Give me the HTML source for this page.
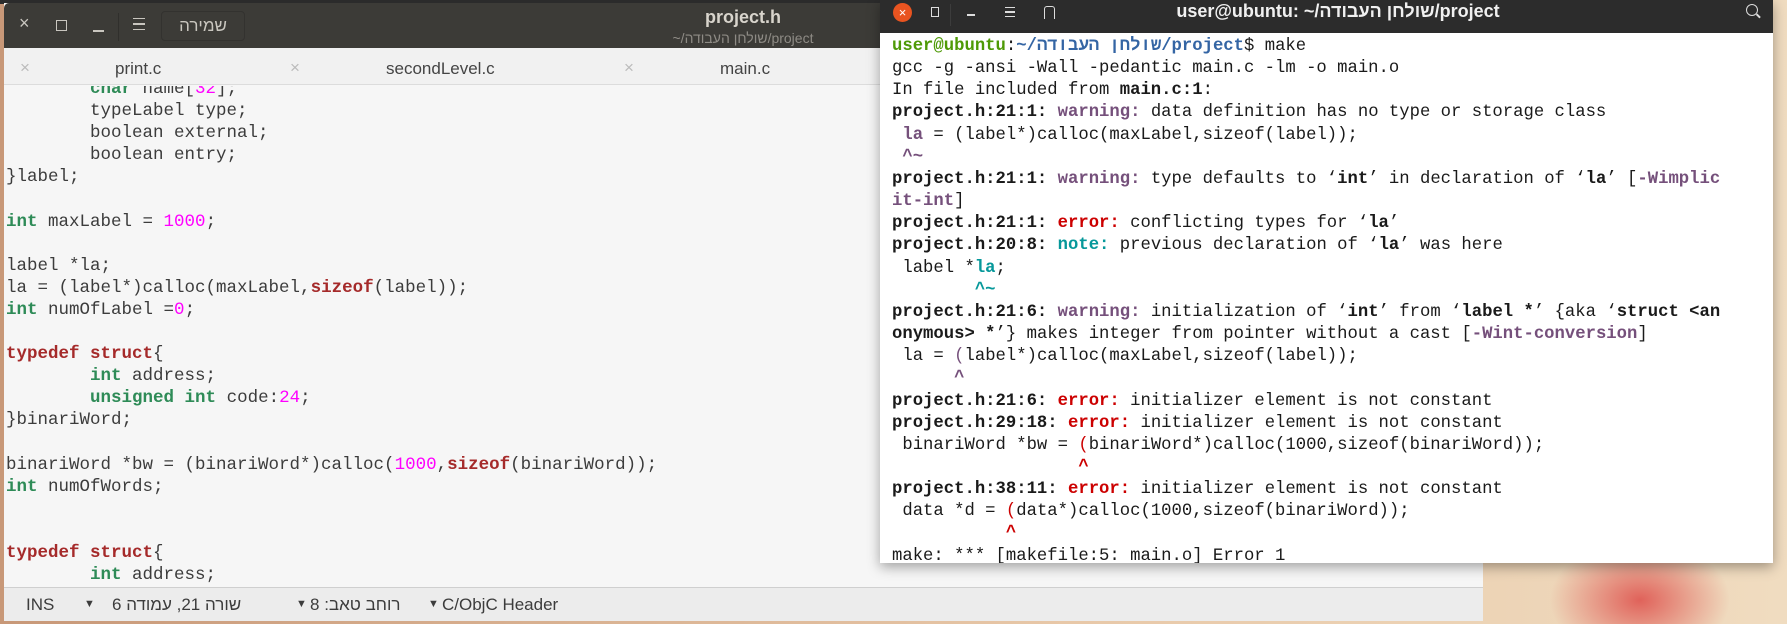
<!DOCTYPE html>
<html><head><meta charset="utf-8"><style>
*{margin:0;padding:0;box-sizing:border-box}
body{width:1787px;height:624px;overflow:hidden;position:relative;background:#d9b89a;font-family:"Liberation Sans","Noto Sans CJK SC",sans-serif}
.abs{position:absolute}
pre{font-family:"Liberation Mono",monospace;white-space:pre;position:absolute}
#ed pre{font-size:17.5px;line-height:22.1px;color:#3c3c3c}
.k{color:#2e8b57;font-weight:bold}
.s{color:#a52a2a;font-weight:bold}
.n{color:#ff00ff}
#tm pre{font-size:17.25px;line-height:22.15px;color:#1a1a1a}
b{font-weight:bold}
.w{color:#75507b;font-weight:bold}
.e{color:#cc0000;font-weight:bold}
.t{color:#06989a;font-weight:bold}
.g{color:#4e9a06;font-weight:bold}
.bl{color:#3465a4;font-weight:bold}
.wn{color:#75507b}
</style></head><body>
<div class="abs" style="left:0;top:0;width:1787px;height:624px;background:radial-gradient(ellipse 90px 60px at 1640px 600px,#e0625a,rgba(224,98,90,0)),linear-gradient(90deg,#c89878,#e8c8a8 60%,#f0dcc0);"></div>
<div class="abs" style="left:0;top:0;width:900px;height:4px;background:#2b2b2b"></div>
<div class="abs" style="left:4px;top:3px;width:1479px;height:618px;background:#f6f6f6;overflow:hidden">
 <div class="abs" style="left:0;top:0;width:1479px;height:45px;background:#3c3b37;border-radius:5px 5px 0 0"></div>
 <div class="abs" style="left:15px;top:10px;color:#c9c6bf;font-size:18px">×</div>
 <div class="abs" style="left:52px;top:17px;width:11px;height:11px;border:1.5px solid #c9c6bf"></div>
 <div class="abs" style="left:89px;top:27px;width:11px;height:2px;background:#c9c6bf"></div>
 <div class="abs" style="left:114px;top:10px;width:1px;height:28px;background:#302f2c"></div>
 <div class="abs" style="left:129px;top:15px;width:12px;height:12px;border-top:1.5px solid #c9c6bf;border-bottom:1.5px solid #c9c6bf"><div style="margin-top:4px;height:1.5px;background:#c9c6bf"></div></div>
 <div class="abs" style="left:157px;top:8px;width:84px;height:30px;border:1px solid #33322f;border-radius:4px;color:#c9c6bf;font-size:17px;text-align:center;line-height:28px">שמירה</div>
 <div class="abs" style="left:639px;top:4px;width:200px;text-align:center;color:#d8d4cc;font-size:18px;font-weight:bold">project.h</div>
 <div class="abs" style="left:589px;top:27px;width:300px;text-align:center;color:#8e8b85;font-size:14px">~/שולחן העבודה/project</div>
 <div class="abs" style="left:0;top:45px;width:1479px;height:37px;background:#f1f1f1;border-bottom:1px solid #dcdcdc;color:#444;font-size:17px">
  <span class="abs" style="left:16px;top:10px;color:#bbb">×</span>
  <span class="abs" style="left:111px;top:11px">print.c</span>
  <span class="abs" style="left:286px;top:10px;color:#bbb">×</span>
  <span class="abs" style="left:382px;top:11px">secondLevel.c</span>
  <span class="abs" style="left:620px;top:10px;color:#bbb">×</span>
  <span class="abs" style="left:716px;top:11px">main.c</span>
 </div>
 <div id="ed" class="abs" style="left:0;top:83px;width:1479px;height:501px;overflow:hidden">
<pre style="left:2px;top:-8px">        <span class="k">char</span> name[<span class="n">32</span>];
        typeLabel type;
        boolean external;
        boolean entry;
}label;

<span class="k">int</span> maxLabel = <span class="n">1000</span>;

label *la;
la = (label*)calloc(maxLabel,<span class="s">sizeof</span>(label));
<span class="k">int</span> numOfLabel =<span class="n">0</span>;

<span class="s">typedef</span> <span class="s">struct</span>{
        <span class="k">int</span> address;
        <span class="k">unsigned</span> <span class="k">int</span> code:<span class="n">24</span>;
}binariWord;

binariWord *bw = (binariWord*)calloc(<span class="n">1000</span>,<span class="s">sizeof</span>(binariWord));
<span class="k">int</span> numOfWords;


<span class="s">typedef</span> <span class="s">struct</span>{
        <span class="k">int</span> address;
        <span class="k">unsigned</span> <span class="k">int</span> code:<span class="n">24</span>;</pre>
 </div>
 <div class="abs" style="left:0;top:584px;width:1479px;height:34px;background:#ececec;border-top:1px solid #cfcfcf;color:#3c3c3c;font-size:17px;line-height:33px">
  <span class="abs" style="left:22px">INS</span>
  <span class="abs" style="left:80px;font-size:11px">▼</span>
  <span class="abs" style="left:108px" dir="rtl">שורה 21, עמודה 6</span>
  <span class="abs" style="left:292px;font-size:11px">▼</span>
  <span class="abs" style="left:306px" dir="rtl">רוחב טאב: 8</span>
  <span class="abs" style="left:424px;font-size:11px">▼</span>
  <span class="abs" style="left:438px">C/ObjC Header</span>
 </div>
</div>
<div class="abs" style="left:880px;top:0;width:893px;height:563px;background:#fff;box-shadow:0 4px 12px rgba(0,0,0,.35);overflow:hidden">
 <div class="abs" style="left:0;top:0;width:893px;height:33px;background:#2c2c2c"></div>
 <div class="abs" style="left:13px;top:3px;width:19px;height:19px;border-radius:50%;background:#e95420;color:#fff;font-size:13px;text-align:center;line-height:19px">×</div>
 <div class="abs" style="left:51px;top:7px;width:8px;height:10px;border:1.5px solid #ddd"></div>
 <div class="abs" style="left:87px;top:14px;width:8px;height:1.5px;background:#ddd"></div>
 <div class="abs" style="left:70px;top:4px;width:1px;height:22px;background:#3c3c3c"></div>
 <div class="abs" style="left:125px;top:7px;width:10px;height:10px;border-top:1.5px solid #ddd;border-bottom:1.5px solid #ddd"><div style="margin-top:3px;height:1.5px;background:#ddd"></div></div>
 <div class="abs" style="left:164px;top:6px;width:11px;height:13px;border:1.5px solid #ddd;border-bottom:none;border-radius:3px 3px 0 0"></div>
 <div class="abs" style="left:178px;top:1px;width:560px;text-align:center;color:#f0f0f0;font-size:18px;font-weight:bold" dir="ltr">user@ubuntu: ~/<bdi>שולחן העבודה</bdi>/project</div>
 <div class="abs" style="left:866px;top:4px;width:12px;height:12px;border:1.5px solid #ddd;border-radius:50%"></div>
 <div class="abs" style="left:876px;top:15px;width:5px;height:1.5px;background:#ddd;transform:rotate(45deg)"></div>
 <div id="tm">
<pre style="left:12px;top:36px"><span class="g">user@ubuntu</span>:<span class="bl">~/<bdi>שולחן העבודה</bdi>/project</span>$ make
gcc -g -ansi -Wall -pedantic main.c -lm -o main.o
In file included from <b>main.c:1</b>:
<b>project.h:21:1:</b> <span class="w">warning: </span>data definition has no type or storage class
 <span class="w">la</span> = (label*)calloc(maxLabel,sizeof(label));
 <span class="w">^~</span>
<b>project.h:21:1:</b> <span class="w">warning: </span>type defaults to ‘<b>int</b>’ in declaration of ‘<b>la</b>’ [<span class="w">-Wimplic
it-int</span>]
<b>project.h:21:1:</b> <span class="e">error: </span>conflicting types for ‘<b>la</b>’
<b>project.h:20:8:</b> <span class="t">note: </span>previous declaration of ‘<b>la</b>’ was here
 label *<span class="t">la</span>;
        <span class="t">^~</span>
<b>project.h:21:6:</b> <span class="w">warning: </span>initialization of ‘<b>int</b>’ from ‘<b>label *</b>’ {aka ‘<b>struct &lt;an
onymous&gt; *</b>’} makes integer from pointer without a cast [<span class="w">-Wint-conversion</span>]
 la = <span class="wn">(</span>label*)calloc(maxLabel,sizeof(label));
      <span class="w">^</span>
<b>project.h:21:6:</b> <span class="e">error: </span>initializer element is not constant
<b>project.h:29:18:</b> <span class="e">error: </span>initializer element is not constant
 binariWord *bw = <span style="color:#cc0000">(</span>binariWord*)calloc(1000,sizeof(binariWord));
                  <span class="e">^</span>
<b>project.h:38:11:</b> <span class="e">error: </span>initializer element is not constant
 data *d = <span style="color:#cc0000">(</span>data*)calloc(1000,sizeof(binariWord));
           <span class="e">^</span>
make: *** [makefile:5: main.o] Error 1</pre>
 </div>
</div>
</body></html>
